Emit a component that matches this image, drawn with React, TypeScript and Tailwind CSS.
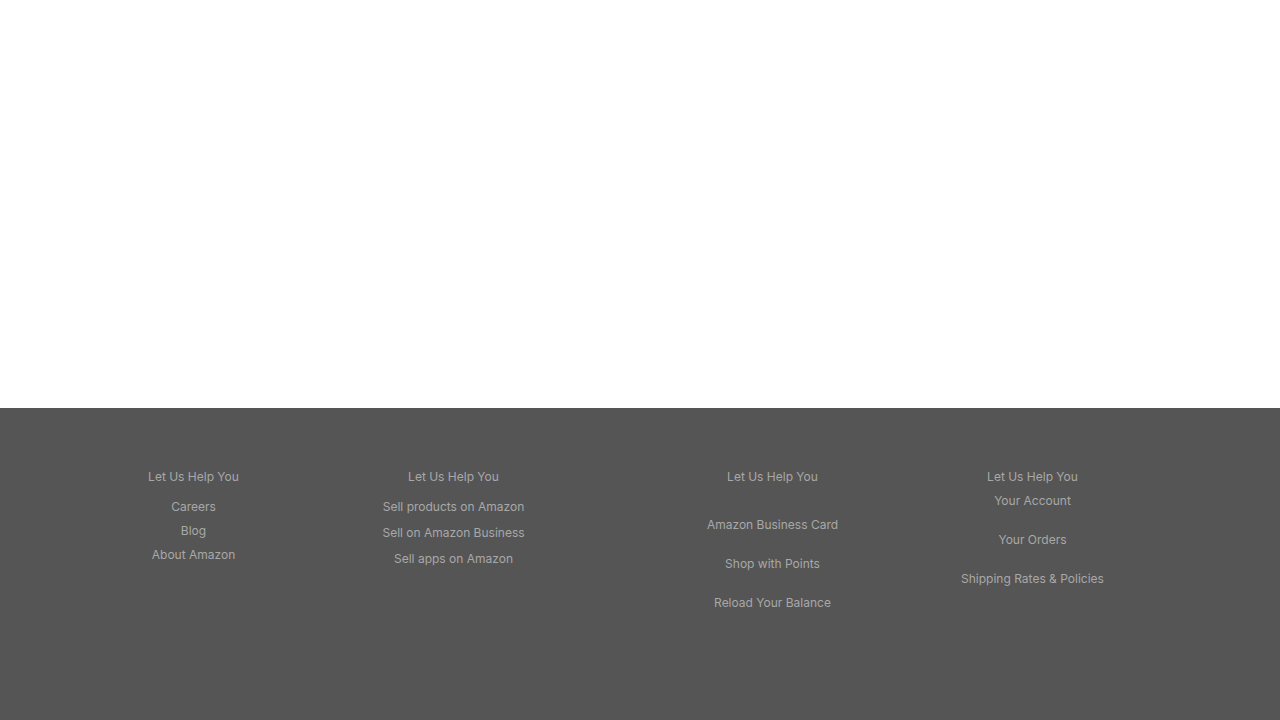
const font = { fontFamily: 'Inter, "Liberation Sans", sans-serif' };

function Column({
  items,
  first,
  gap,
  className = '',
}: {
  items: string[];
  first: string;
  gap: string;
  className?: string;
}) {
  return (
    <div className={`w-[260px] flex flex-col items-center text-[12px] leading-4 ${className}`}>
      <h4 className="font-normal">Let Us Help You</h4>
      <ul className={`flex flex-col items-center ${first} ${gap}`}>
        {items.map(item => (
          <li key={item}>
            <a href="#">{item}</a>
          </li>
        ))}
      </ul>
    </div>
  );
}

export default function App() {
  return (
    <div className="min-h-[720px] flex flex-col bg-white" style={font}>
      <main className="h-[408px] bg-white" />
      <footer className="flex-1 bg-[#555555] text-[#a8a8a8] pt-[61px] pl-[63.5px]">
        <div className="flex">
          <Column items={['Careers', 'Blog', 'About Amazon']} first="mt-[14px]" gap="gap-2" />
          <Column
            items={['Sell products on Amazon', 'Sell on Amazon Business', 'Sell apps on Amazon']}
            first="mt-[14px]"
            gap="gap-[10px]"
          />
          <Column
            className="ml-[59px]"
            items={['Amazon Business Card', 'Shop with Points', 'Reload Your Balance']}
            first="mt-[32px]"
            gap="gap-[23px]"
          />
          <Column
            items={['Your Account', 'Your Orders', 'Shipping Rates & Policies']}
            first="mt-2"
            gap="gap-[23px]"
          />
        </div>
      </footer>
    </div>
  );
}
